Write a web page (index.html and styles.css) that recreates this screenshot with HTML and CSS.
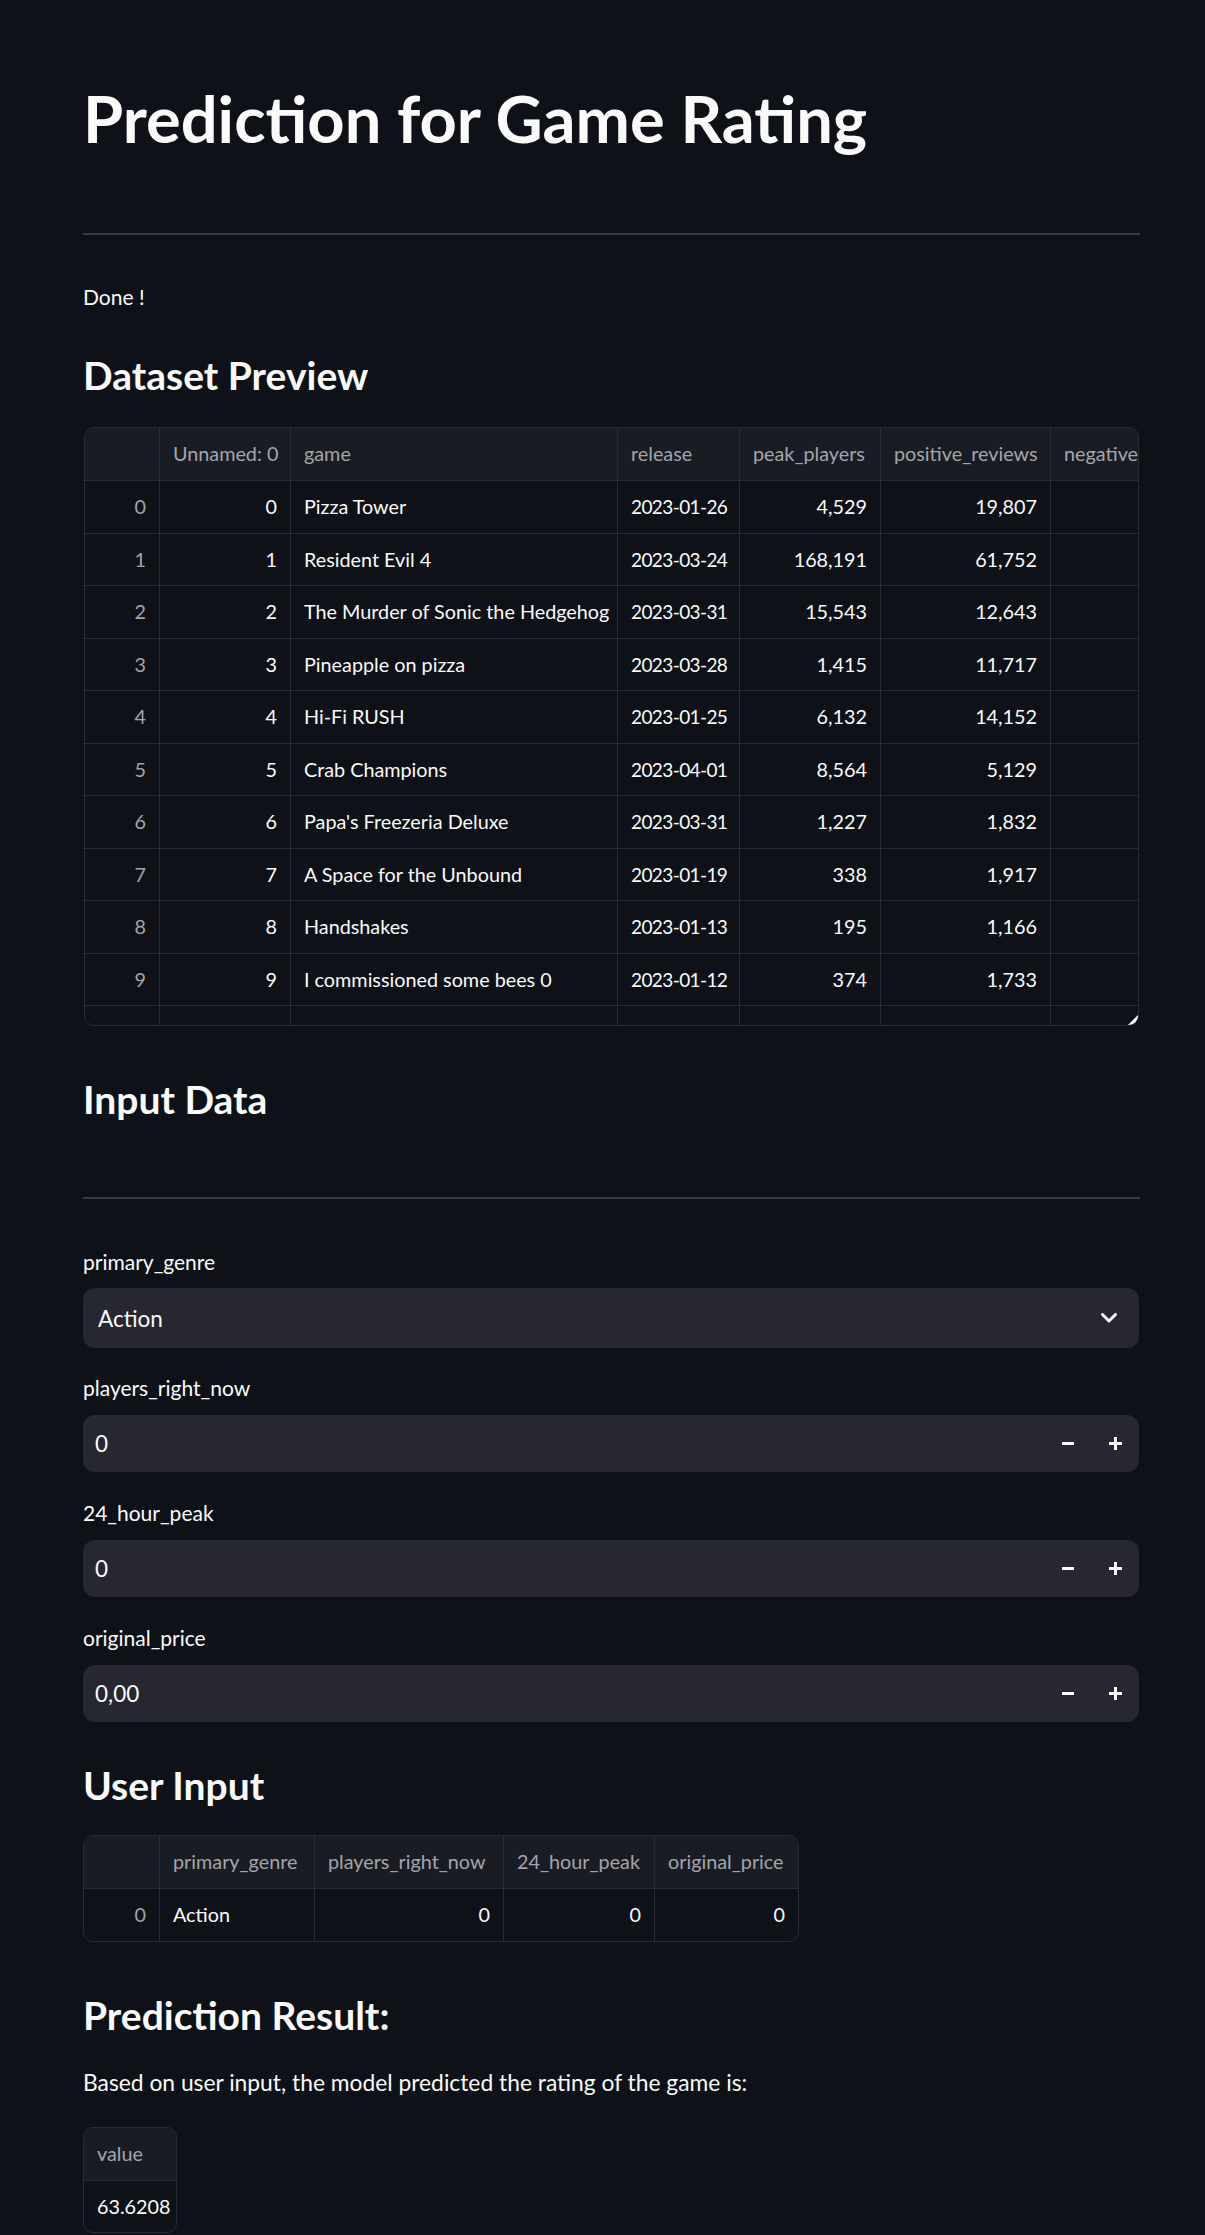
FILE: index.html
```html
<!DOCTYPE html>
<html lang="en">
<head>
<meta charset="utf-8">
<title>Prediction for Game Rating</title>
<link rel="stylesheet" href="styles.css">
</head>
<body>
<main class="page">
  <h1 class="title">Prediction for Game Rating</h1>
  <hr class="rule rule-top">
  <div class="done">Done !</div>

  <h3 class="heading h-dataset">Dataset Preview</h3>
  <div class="df df-main">
    <div class="row head">
      <div class="c"></div><div class="c">Unnamed: 0</div><div class="c">game</div><div class="c">release</div><div class="c">peak_players</div><div class="c">positive_reviews</div><div class="c">negative_reviews</div>
    </div>
    <div class="row"><div class="c idx">0</div><div class="c num">0</div><div class="c">Pizza Tower</div><div class="c date">2023-01-26</div><div class="c num">4,529</div><div class="c num">19,807</div><div class="c num">199</div></div>
    <div class="row"><div class="c idx">1</div><div class="c num">1</div><div class="c">Resident Evil 4</div><div class="c date">2023-03-24</div><div class="c num">168,191</div><div class="c num">61,752</div><div class="c num">2,636</div></div>
    <div class="row"><div class="c idx">2</div><div class="c num">2</div><div class="c">The Murder of Sonic the Hedgehog</div><div class="c date">2023-03-31</div><div class="c num">15,543</div><div class="c num">12,643</div><div class="c num">197</div></div>
    <div class="row"><div class="c idx">3</div><div class="c num">3</div><div class="c">Pineapple on pizza</div><div class="c date">2023-03-28</div><div class="c num">1,415</div><div class="c num">11,717</div><div class="c num">79</div></div>
    <div class="row"><div class="c idx">4</div><div class="c num">4</div><div class="c">Hi-Fi RUSH</div><div class="c date">2023-01-25</div><div class="c num">6,132</div><div class="c num">14,152</div><div class="c num">239</div></div>
    <div class="row"><div class="c idx">5</div><div class="c num">5</div><div class="c">Crab Champions</div><div class="c date">2023-04-01</div><div class="c num">8,564</div><div class="c num">5,129</div><div class="c num">160</div></div>
    <div class="row"><div class="c idx">6</div><div class="c num">6</div><div class="c">Papa's Freezeria Deluxe</div><div class="c date">2023-03-31</div><div class="c num">1,227</div><div class="c num">1,832</div><div class="c num">39</div></div>
    <div class="row"><div class="c idx">7</div><div class="c num">7</div><div class="c">A Space for the Unbound</div><div class="c date">2023-01-19</div><div class="c num">338</div><div class="c num">1,917</div><div class="c num">25</div></div>
    <div class="row"><div class="c idx">8</div><div class="c num">8</div><div class="c">Handshakes</div><div class="c date">2023-01-13</div><div class="c num">195</div><div class="c num">1,166</div><div class="c num">18</div></div>
    <div class="row"><div class="c idx">9</div><div class="c num">9</div><div class="c">I commissioned some bees 0</div><div class="c date">2023-01-12</div><div class="c num">374</div><div class="c num">1,733</div><div class="c num">19</div></div>
    <div class="row"><div class="c idx">10</div><div class="c num">10</div><div class="c">Sole Blaster XD</div><div class="c date">2023-01-06</div><div class="c num">1,424</div><div class="c num">1,102</div><div class="c num">17</div></div>
    <svg class="resize" width="10" height="10" viewBox="0 0 10 10"><path d="M10 0 V4 Q10 10 4 10 H0 Z" fill="#fafafa"/></svg>
  </div>

  <h3 class="heading h-input">Input Data</h3>
  <hr class="rule rule-input">

  <div class="field field-first">
    <label class="label">primary_genre</label>
    <div class="select">
      <span class="value">Action</span>
      <svg class="chev" width="16" height="10" viewBox="0 0 16 10"><polyline points="1.5,1.5 8,8 14.5,1.5" fill="none" stroke="#fafafa" stroke-width="3" stroke-linecap="round" stroke-linejoin="round"/></svg>
    </div>
  </div>

  <div class="field">
    <label class="label">players_right_now</label>
    <div class="number">
      <span class="value">0</span>
      <div class="steps">
        <span class="step"><svg width="13" height="13" viewBox="0 0 13 13"><rect x="0" y="5" width="12" height="3" fill="#fafafa"/></svg></span>
        <span class="step"><svg width="13" height="13" viewBox="0 0 13 13"><rect x="0" y="5" width="13" height="3" fill="#fafafa"/><rect x="5" y="0" width="3" height="13" fill="#fafafa"/></svg></span>
      </div>
    </div>
  </div>

  <div class="field field-next">
    <label class="label">24_hour_peak</label>
    <div class="number">
      <span class="value">0</span>
      <div class="steps">
        <span class="step"><svg width="13" height="13" viewBox="0 0 13 13"><rect x="0" y="5" width="12" height="3" fill="#fafafa"/></svg></span>
        <span class="step"><svg width="13" height="13" viewBox="0 0 13 13"><rect x="0" y="5" width="13" height="3" fill="#fafafa"/><rect x="5" y="0" width="3" height="13" fill="#fafafa"/></svg></span>
      </div>
    </div>
  </div>

  <div class="field field-next">
    <label class="label">original_price</label>
    <div class="number">
      <span class="value">0,00</span>
      <div class="steps">
        <span class="step"><svg width="13" height="13" viewBox="0 0 13 13"><rect x="0" y="5" width="12" height="3" fill="#fafafa"/></svg></span>
        <span class="step"><svg width="13" height="13" viewBox="0 0 13 13"><rect x="0" y="5" width="13" height="3" fill="#fafafa"/><rect x="5" y="0" width="3" height="13" fill="#fafafa"/></svg></span>
      </div>
    </div>
  </div>

  <h3 class="heading h-user">User Input</h3>
  <div class="df df-user">
    <div class="row head">
      <div class="c"></div><div class="c">primary_genre</div><div class="c">players_right_now</div><div class="c">24_hour_peak</div><div class="c">original_price</div>
    </div>
    <div class="row last"><div class="c idx">0</div><div class="c">Action</div><div class="c num">0</div><div class="c num">0</div><div class="c num">0</div></div>
  </div>

  <h3 class="heading h-result">Prediction Result:</h3>
  <p class="para">Based on user input, the model predicted the rating of the game is:</p>
  <div class="df df-value">
    <div class="row head"><div class="c">value</div></div>
    <div class="row last"><div class="c">63.6208</div></div>
  </div>
</main>
</body>
</html>
```

FILE: styles.css
```css
html, body {
  margin: 0;
  padding: 0;
  background: #0e1117;
}
body {
  color: #fafafa;
  font-family: Lato, "Liberation Sans", sans-serif;
  height: 2235px;
  overflow: hidden;
}
.page {
  display: flex;
  flex-direction: column;
  width: 1056px;
  margin-left: 83px;
  padding-top: 78px;
}
.title {
  margin: 0;
  font-size: 65px;
  line-height: 80px;
  font-weight: 700;
  height: 80px;
}
.rule {
  margin: 0;
  border: 0;
  height: 2px;
  width: 1057px;
  background: rgba(250, 250, 250, 0.18);
}
.rule-top { margin-top: 75px; }
.done {
  margin-top: 47px;
  font-size: 21px;
  line-height: 30px;
  height: 30px;
}
.heading {
  margin: 0;
  font-size: 39px;
  line-height: 52px;
  height: 52px;
  font-weight: 700;
}
.h-dataset { margin-top: 37px; }
.h-input { margin-top: 47px; }
.rule-input { margin-top: 72px; }
.h-user { margin-top: 37px; }
.h-result { margin-top: 47px; }
.para {
  margin: 23px 0 0;
  font-size: 22.8px;
  line-height: 36px;
  height: 36px;
}

/* dataframes */
.df {
  position: relative;
  box-sizing: border-box;
  border: 1px solid #292c33;
  border-radius: 10px;
  overflow: hidden;
  background: #0e1117;
  font-size: 19.8px;
}
.df .row {
  display: grid;
  height: 52.5px;
  box-sizing: border-box;
  border-bottom: 1px solid #292c33;
}
.df .row.head {
  height: 53px;
  background: #1a1c24;
  color: #a3a5ab;
}
.df .row.last { border-bottom: 0; height: 52px; }
.df .c {
  box-sizing: border-box;
  border-right: 1px solid #292c33;
  padding: 0 13px;
  line-height: 51px;
  white-space: nowrap;
  overflow: hidden;
}
.df .c:last-child { border-right: 0; }
.df .c.num, .df .c.idx { text-align: right; }
.df .c.idx { color: #a3a5ab; }
.df .c.date {
  font-size: 19px;
  letter-spacing: -0.6px;
  padding-right: 4px;
}

.df-main {
  margin-top: 26px;
  width: 1055px;
  margin-left: 1px;
  height: 599px;
}
.df-main .row {
  grid-template-columns: 75px 131px 327px 122px 141px 170px 170px;
  width: 1136px;
}
.df-main .c:last-child { border-right: 1px solid #292c33; }
.resize {
  position: absolute;
  right: 0;
  bottom: 0;
}

.df-user {
  margin-top: 24px;
  width: 716px;
  height: 107px;
}
.df-user .row {
  grid-template-columns: 76px 155px 189px 151px 143px;
}

.df-value {
  margin-top: 27px;
  width: 94px;
  height: 106px;
}
.df-value .row { grid-template-columns: 92px; }

/* widgets */
.field {
  display: flex;
  flex-direction: column;
  margin-top: 25px;
}
.field-first { margin-top: 48px; }
.field-next { margin-top: 26px; }
.label {
  font-size: 21px;
  line-height: 30px;
  height: 30px;
}
.select, .number {
  display: flex;
  align-items: center;
  box-sizing: border-box;
  width: 1056px;
  background: #262730;
  border-radius: 12px;
  font-size: 22.5px;
}
.select {
  margin-top: 11px;
  height: 60px;
  padding: 0 22px 0 15px;
  justify-content: space-between;
}
.number {
  margin-top: 12px;
  height: 57px;
  padding-left: 12px;
}
.number .value { flex: 1; }
.chev { display: block; }
.steps {
  display: flex;
}
.step {
  width: 47px;
  height: 57px;
  display: flex;
  align-items: center;
  justify-content: center;
}
.step svg { display: block; }
```
